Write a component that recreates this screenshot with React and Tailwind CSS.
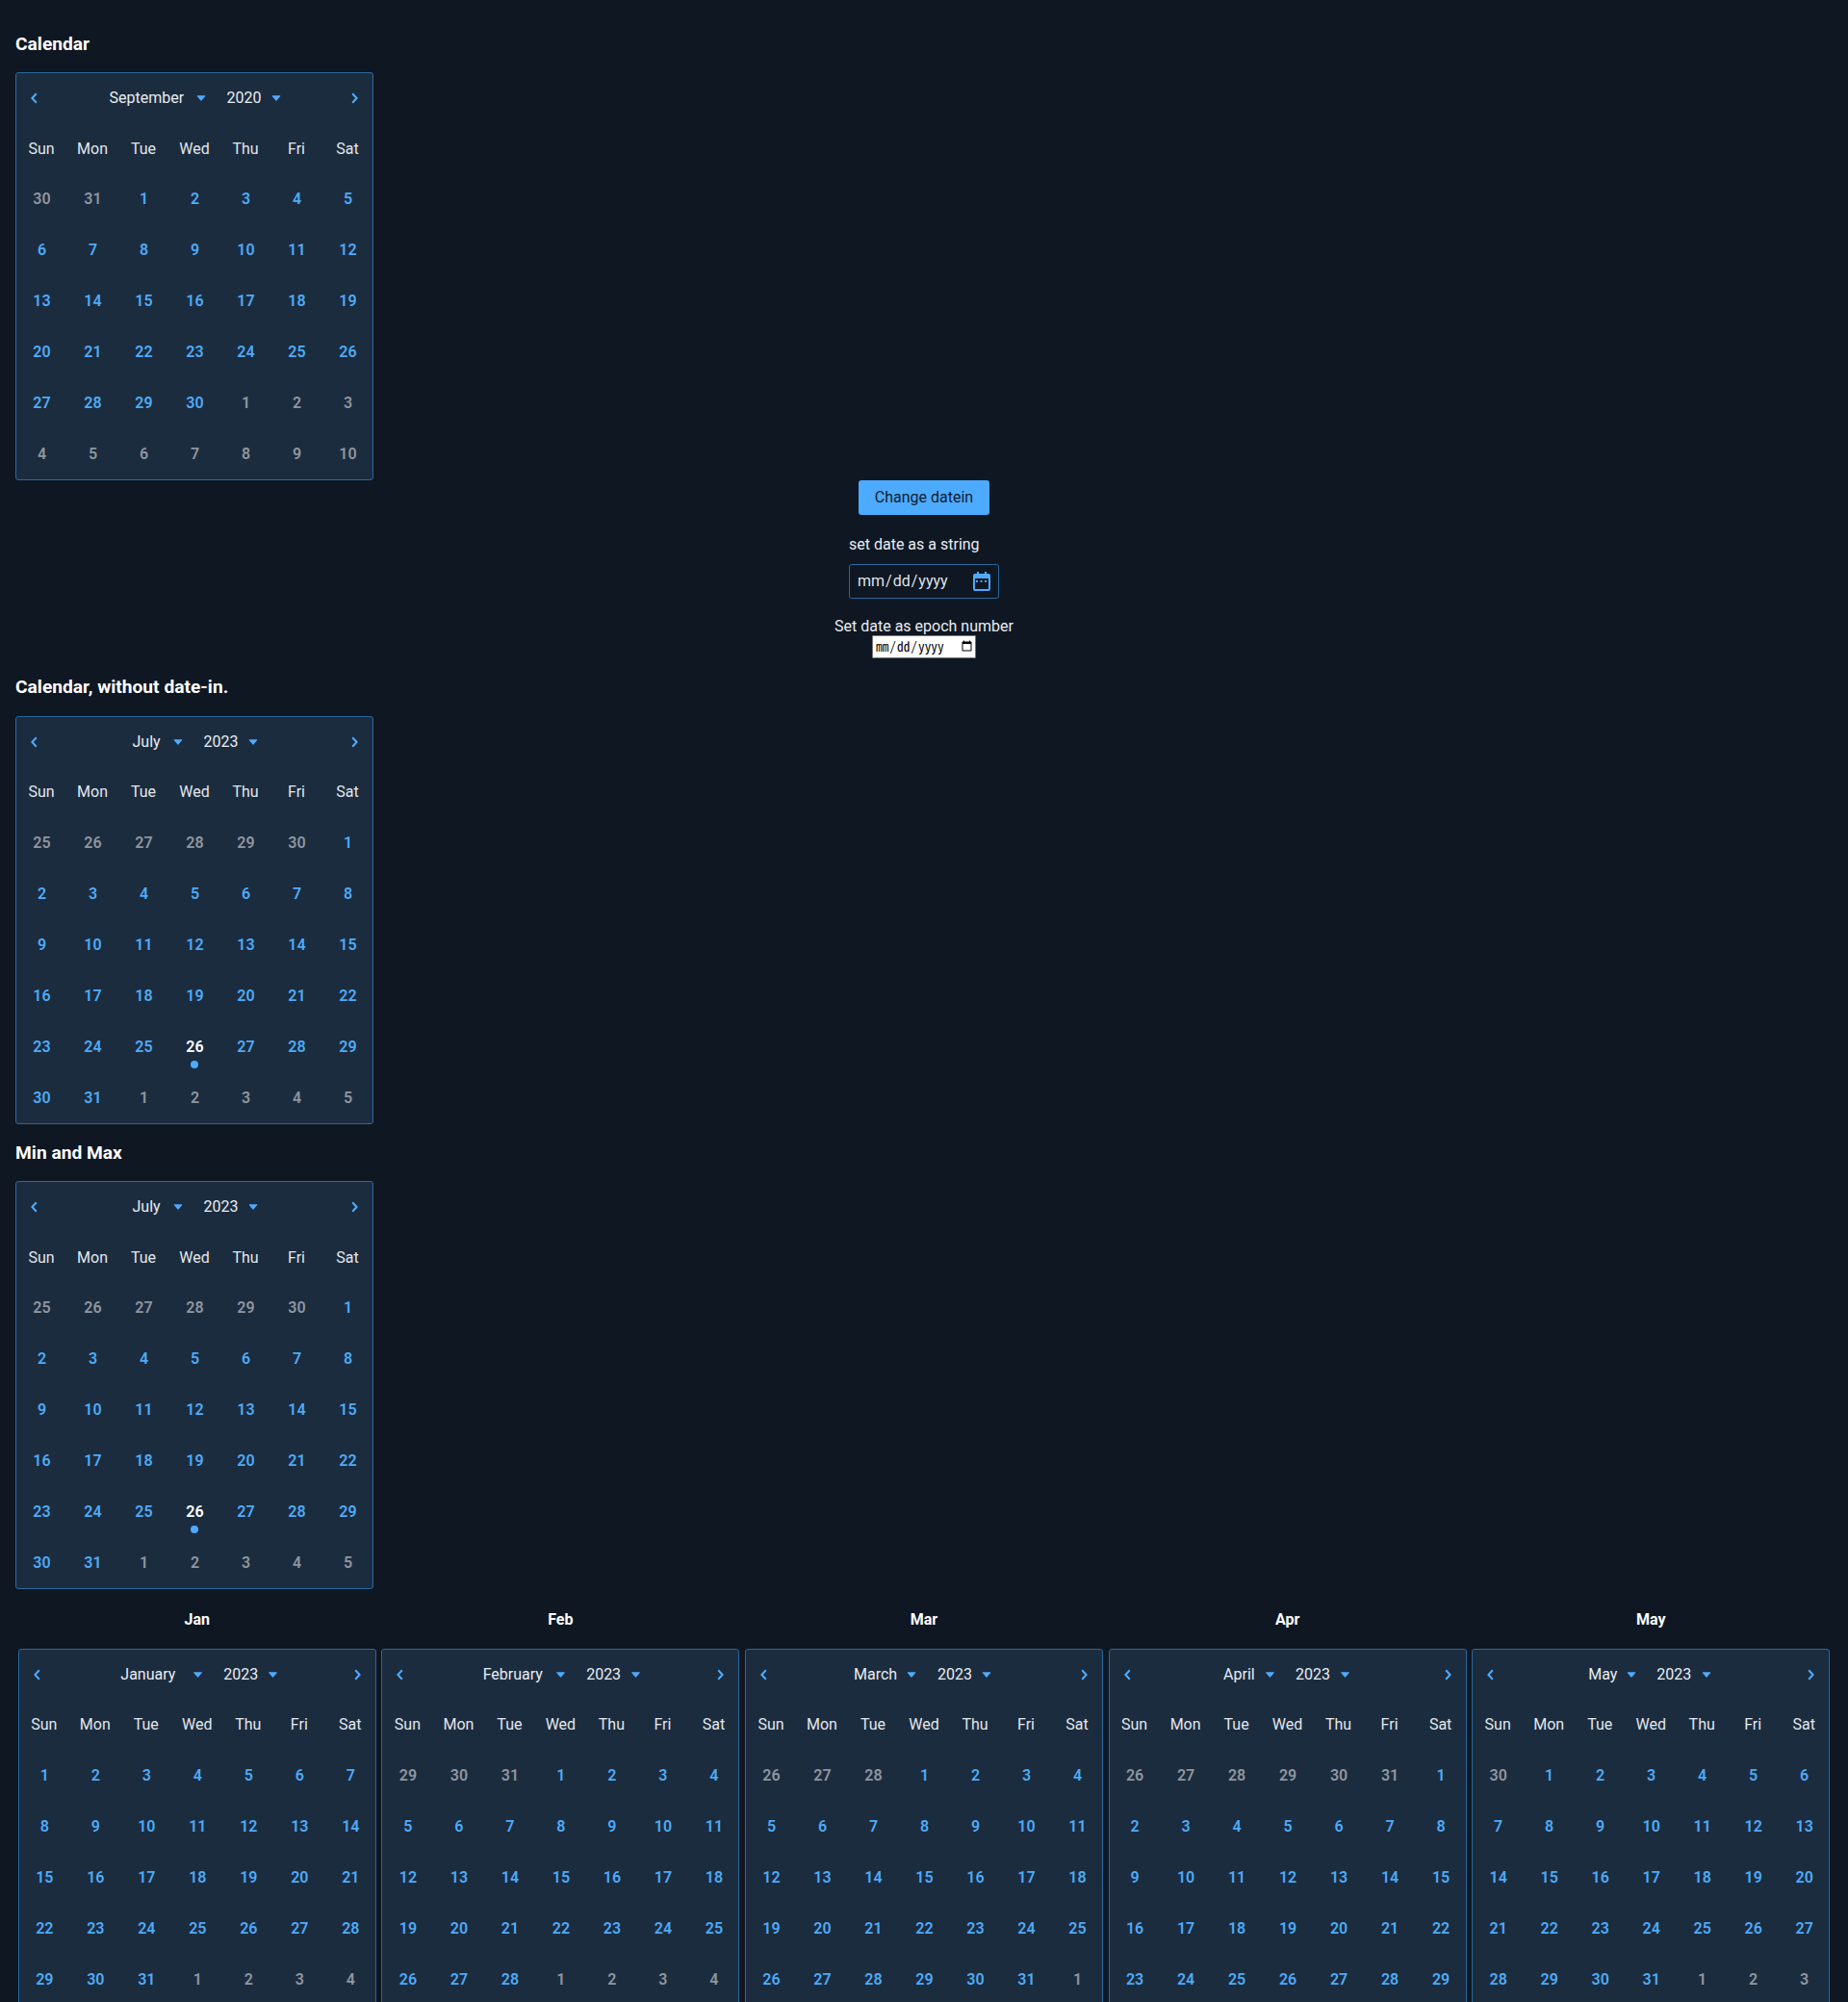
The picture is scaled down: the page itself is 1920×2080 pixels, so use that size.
import { useMemo } from "react"

const WEEKDAYS = ["Sun", "Mon", "Tue", "Wed", "Thu", "Fri", "Sat"]
const MONTHS = ["January", "February", "March", "April", "May", "June", "July", "August", "September"]

// gap between the month name and its caret, and the small drift of the whole title
const monthTitle = {
  January: { gap: "ml-[18px]", shift: "translate-x-[2px]" },
  February: { gap: "ml-[13.5px]", shift: "translate-x-[1px]" },
  March: { gap: "ml-[10px]", shift: "-translate-x-[1.5px]" },
  April: { gap: "ml-[11px]", shift: "-translate-x-[1px]" },
  May: { gap: "ml-[9px]", shift: "-translate-x-[1.5px]" },
  July: { gap: "ml-[13px]", shift: "translate-x-[0.5px]" },
  September: { gap: "ml-[13px]", shift: "translate-x-[0.5px]" },
}

const buildDays = (year, month) => {
  const first = new Date(year, month, 1)
  const start = new Date(year, month, 1 - first.getDay())
  const days = []
  for (let i = 0; i < 42; i++) {
    const d = new Date(start.getFullYear(), start.getMonth(), start.getDate() + i)
    days.push({ key: i, day: d.getDate(), inMonth: d.getMonth() === month })
  }
  return days
}

const Caret = () => (
  <svg width="9" height="6" viewBox="0 0 9 6" className="block shrink-0">
    <path d="M0.6 0.3h7.8a.5.5 0 0 1 .4.8L4.9 5.6a.5.5 0 0 1-.8 0L.2 1.1a.5.5 0 0 1 .4-.8z" fill="#4dabff" />
  </svg>
)

const Chevron = ({ dir }) => (
  <svg width="7" height="12" viewBox="0 0 7 12" fill="none" stroke="#4dabff" strokeWidth="2">
    <path d={dir === "left" ? "M5.8 1.2 1.4 6l4.4 4.8" : "M1.2 1.2 5.6 6l-4.4 4.8"} />
  </svg>
)

const Calendar = ({ year, month, today, nudgeWeekdays = false }) => {
  const days = useMemo(() => buildDays(year, month), [year, month])
  const name = MONTHS[month]
  const title = monthTitle[name]

  return (
    <div className="w-[372px] h-[424px] shrink-0 overflow-hidden rounded-[3px] border border-[#2a689f] bg-[#1c2c3f]">
      <div className="flex h-[51px] items-center justify-between px-[15px]">
        <Chevron dir="left" />
        <div className={"flex items-center text-[#e8edf2] " + title.shift}>
          <select className="appearance-none bg-transparent outline-none" defaultValue={name}>
            <option className="text-black">{name}</option>
          </select>
          <span className={title.gap}>
            <Caret />
          </span>
          <select className="ml-[22px] appearance-none bg-transparent outline-none" defaultValue={year}>
            <option className="text-black">{year}</option>
          </select>
          <span className="ml-[11px]">
            <Caret />
          </span>
        </div>
        <Chevron dir="right" />
      </div>
      <div className="-ml-[0.5px] grid grid-cols-[repeat(7,53px)] auto-rows-[53px]">
        {WEEKDAYS.map((w) => (
          <div key={w} className={"flex items-center justify-center text-[#e2e7ec] " + (nudgeWeekdays ? "pt-[2px]" : "")}>
            {w}
          </div>
        ))}
        {days.map((d) => {
          const isToday = d.inMonth && d.day === today
          return (
            <div
              key={d.key}
              className={
                "relative flex items-center justify-center pl-px font-semibold " +
                (isToday ? "text-white " : d.inMonth ? "text-[#4dabf7] " : "text-[#8f969e] ")
              }
            >
              {d.day}
              {isToday && <span className="absolute bottom-[4px] left-1/2 h-2 w-2 -translate-x-1/2 rounded-full bg-[#4dabff]" />}
            </div>
          )
        })}
      </div>
    </div>
  )
}

const Heading = ({ children, className = "" }) => (
  <h2 className={"flex h-[30px] items-center pt-[2px] text-[19.2px] font-bold text-white " + className}>{children}</h2>
)

const Controls = () => (
  <div className="flex flex-col items-center">
    <button className="h-9 w-[136px] rounded-[3px] bg-[#4dabff] text-[#12202e]">Change datein</button>
    <div className="mt-[21px] w-[156px] leading-5 text-[#e8edf2]">set date as a string</div>
    <div className="mt-[10px] flex h-9 w-[156px] items-center justify-between rounded-[3px] border border-[#2a689f] pl-[7px] pr-[8px]">
      <input
        type="date"
        className="w-[118px] bg-transparent text-[16px] text-[#dde2e7] outline-none [font-family:Roboto,sans-serif] [&::-webkit-calendar-picker-indicator]:hidden"
      />
      <svg width="18" height="20" viewBox="0 0 18 20">
        <path
          d="M4 0h2v2h6V0h2v2h2a2 2 0 0 1 2 2v14a2 2 0 0 1-2 2H2a2 2 0 0 1-2-2V4a2 2 0 0 1 2-2h2zM2 7v11h14V7zM3 9h2v2H3zM7.5 9h2v2h-2zM12 9h2v2h-2z"
          fill="#4dabff"
          fillRule="evenodd"
        />
      </svg>
    </div>
    <div className="mt-[19px] -mb-px leading-5 text-[#e8edf2]">Set date as epoch number</div>
    <input
      type="date"
      className="h-6 w-[108px] rounded-[1px] border border-[#767676] bg-white pl-[2px] text-[13.33px] text-black [font-family:'Noto_Sans_Mono_CJK_JP',monospace] [color-scheme:light]"
    />
  </div>
)

const App = () => {
  return (
    <div className="h-[2080px] overflow-hidden bg-[#0f1722] text-[16px] [font-family:Roboto,sans-serif]">
      <div className="px-4 pt-[30px]">
        <Heading className="mb-[15px]">Calendar</Heading>
        <Calendar year={2020} month={8} nudgeWeekdays />
      </div>

      <Controls />

      <div className="px-4 pt-[14px]">
        <Heading className="mb-4">Calendar, without date-in.</Heading>
        <Calendar year={2023} month={6} today={26} />
      </div>

      <div className="px-4 pt-[14px]">
        <Heading className="mb-[15px]">Min and Max</Heading>
        <Calendar year={2023} month={6} today={26} nudgeWeekdays />
      </div>

      <div className="grid grid-cols-5 px-4 pt-[17px]">
        {["Jan", "Feb", "Mar", "Apr", "May"].map((label, i) => (
          <div key={label} className="flex flex-col items-center">
            <div className="mb-[15px] flex h-[30px] items-center font-bold text-white">{label}</div>
            <Calendar year={2023} month={i} />
          </div>
        ))}
      </div>
    </div>
  )
}

export default App
